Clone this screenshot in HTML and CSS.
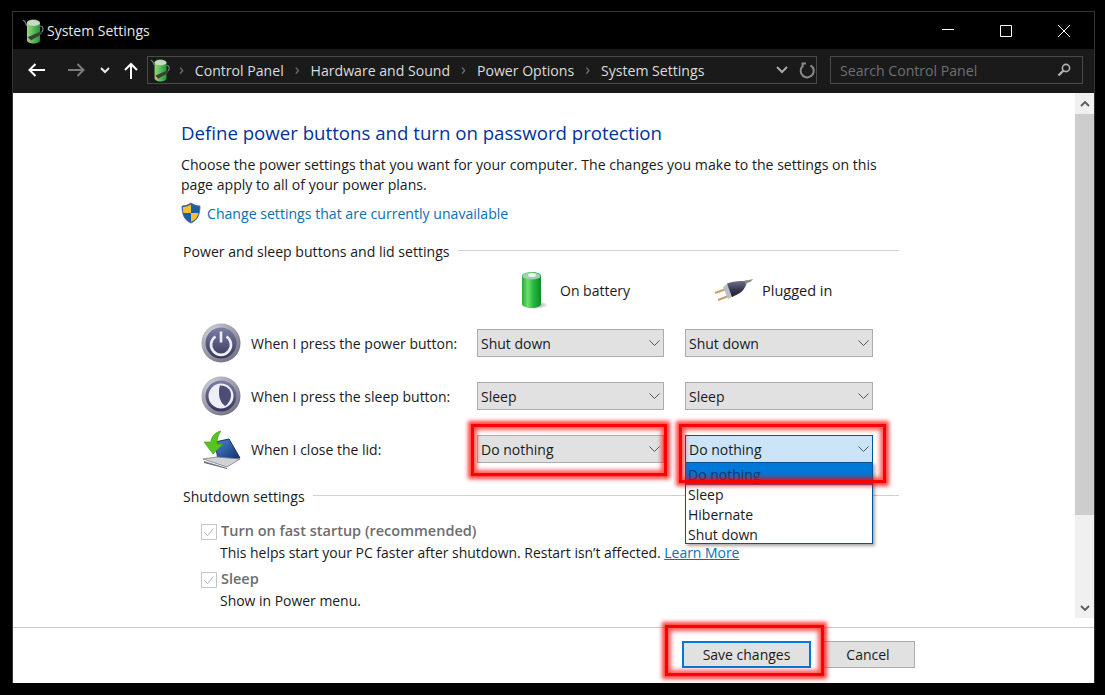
FILE: index.html
```html
<!DOCTYPE html>
<html lang="en">
<head>
<meta charset="utf-8">
<title>System Settings</title>
<link rel="stylesheet" href="styles.css">
</head>
<body>
<div class="window">
  <header class="titlebar">
    <svg class="app-icon" width="24" height="26" viewBox="0 0 24 26"><use href="#batt"/></svg>
    <span class="title">System Settings</span>
    <div class="controls">
      <svg width="14" height="14" viewBox="0 0 14 14"><path d="M1 5.500h12" stroke="#fff" fill="none"/></svg>
      <svg width="14" height="14" viewBox="0 0 14 14"><path d="M1.500 1.500h11v11h-11z" stroke="#fff" fill="none"/></svg>
      <svg width="14" height="14" viewBox="0 0 14 14"><path d="M1 1l12 12M13 1L1 13" stroke="#fff" fill="none"/></svg>
    </div>
  </header>
  <nav class="toolbar">
    <svg class="nav nav-back" width="18" height="14" viewBox="0 0 18 14"><path d="M1.500 7H17M7.500 1L1.500 7l6 6" stroke="#fff" stroke-width="2" fill="none"/></svg>
    <svg class="nav nav-fwd" width="18" height="14" viewBox="0 0 18 14"><path d="M1 7h15.500M10.500 1l6 6-6 6" stroke="#7b7b7b" stroke-width="2" fill="none"/></svg>
    <svg class="nav nav-down" width="10" height="7" viewBox="0 0 10 7"><path d="M1 1l4 4 4-4" stroke="#e8e8e8" stroke-width="2" fill="none"/></svg>
    <svg class="nav nav-up" width="14" height="17" viewBox="0 0 14 17"><path d="M7 17V2M1 8l6-6 6 6" stroke="#fff" stroke-width="2" fill="none"/></svg>
    <div class="address">
      <svg class="crumb-icon" width="22" height="24" viewBox="0 0 24 26"><use href="#batt"/></svg>
      <span class="sep">›</span><span>Control Panel</span>
      <span class="sep">›</span><span>Hardware and Sound</span>
      <span class="sep">›</span><span>Power Options</span>
      <span class="sep">›</span><span>System Settings</span>
      <svg class="addr-down" width="12" height="8" viewBox="0 0 12 8"><path d="M1 1l5 5 5-5" stroke="#a8a8a8" stroke-width="2" fill="none"/></svg>
      <svg class="refresh" width="16" height="17" viewBox="0 0 16 17"><path d="M11.500 3.300A6.500 6.500 0 1 1 3.600 4.300M2.500 1.500H7M3.600 1.500V5" stroke="#8a8a8a" stroke-width="2" fill="none"/></svg>
    </div>
    <div class="search">
      <span>Search Control Panel</span>
      <svg width="14" height="14" viewBox="0 0 14 14"><circle cx="9" cy="5" r="3.600" stroke="#b0b0b0" stroke-width="1.600" fill="none"/><path d="M6.500 7.500L1.500 12.500" stroke="#b0b0b0" stroke-width="2.400"/></svg>
    </div>
  </nav>
  <div class="body">
    <main class="content">
      <h1>Define power buttons and turn on password protection</h1>
      <p class="intro">Choose the power settings that you want for your computer. The changes you make to the settings on this page apply to all of your power plans.</p>
      <div class="uac">
        <svg width="20" height="22" viewBox="0 0 20 22">
          <path d="M10 1c3 2 6 3 9 3 0 8-2 14-9 17C3 18 1 12 1 4c3 0 6-1 9-3z" fill="#1c5fa8"/>
          <path d="M10 2.500v8.500H2.300C2 8.500 2 6.500 2 5c3 0 5.500-1 8-2.500zM10 11h7.500c-.8 4-3 7-7.500 8.700z" fill="#f6c02f"/>
          <path d="M10 1c3 2 6 3 9 3 0 8-2 14-9 17C3 18 1 12 1 4c3 0 6-1 9-3z" fill="none" stroke="#54657a" stroke-width=".8"/>
        </svg>
        <a href="#">Change settings that are currently unavailable</a>
      </div>
      <div class="section section-power"><span>Power and sleep buttons and lid settings</span><i></i></div>
      <div class="grid">
        <div class="col-head col-a">
          <svg width="30" height="40" viewBox="0 0 30 40">
            <defs>
              <linearGradient id="bg" x1="0" x2="1" y1="0" y2="0"><stop offset="0" stop-color="#2aa83a"/><stop offset=".3" stop-color="#6fe06a"/><stop offset=".6" stop-color="#25b840"/><stop offset="1" stop-color="#0d8c2c"/></linearGradient>
              <radialGradient id="sh" cx=".5" cy=".5" r=".5"><stop offset="0" stop-color="#8c8c8c"/><stop offset="1" stop-color="#8c8c8c" stop-opacity="0"/></radialGradient>
            </defs>
            <ellipse cx="17" cy="35" rx="12" ry="4" fill="url(#sh)"/>
            <path d="M3 6c0-2 4-4 9.500-4S22 4 22 6v28c0 2-4 4-9.500 4S3 36 3 34z" fill="url(#bg)"/>
            <ellipse cx="12.500" cy="6" rx="9" ry="3.600" fill="#a9cdb0"/>
            <ellipse cx="13" cy="5" rx="4" ry="2" fill="#eef1ef"/>
          </svg>
          <span>On battery</span>
        </div>
        <div class="col-head col-b">
          <svg width="40" height="24" viewBox="0 0 40 24">
            <defs><linearGradient id="pg" x1="0" x2="0" y1="0" y2="1"><stop offset="0" stop-color="#73778f"/><stop offset=".55" stop-color="#383a50"/><stop offset="1" stop-color="#1d1e2a"/></linearGradient></defs>
            <path d="M1 15l11-4M4 22l12-4.500" stroke="#c8a064" stroke-width="2.200" fill="none"/>
            <path d="M9 9l5-3.500 6 12.500-6 3z" fill="#b9bdca"/>
            <path d="M13 5.500c5-2 12-2.500 17-2.500l4-1-2 5c-2 6-7 9-14 12z" fill="url(#pg)"/>
            <path d="M31 3l8-2-2 2.500-6 2.500z" fill="#8a8d80"/>
          </svg>
          <span>Plugged in</span>
        </div>

        <svg class="row-icon" width="40" height="40" viewBox="0 0 40 40"><use href="#disc"/><path d="M14.500 13.500a10 10 0 1 0 11 0" fill="none" stroke="#eeeef8" stroke-width="2.600"/><path d="M20 8.500v11" stroke="#eeeef8" stroke-width="2.600"/></svg>
        <span class="row-label">When I press the power button:</span>
        <div class="select select-a"><span>Shut down</span><svg class="chev" width="11" height="6" viewBox="0 0 11 6"><path d="M.5.500l5 5 5-5" stroke="#555" fill="none"/></svg></div>
        <div class="select"><span>Shut down</span><svg class="chev" width="11" height="6" viewBox="0 0 11 6"><path d="M.5.500l5 5 5-5" stroke="#555" fill="none"/></svg></div>

        <svg class="row-icon" width="40" height="40" viewBox="0 0 40 40"><use href="#disc"/><circle cx="20" cy="20" r="12.500" fill="#eeeef6"/><path d="M19 9.500c5-.5 11 3 11 9.500 0 5-3 9-6 11-4-3-6-8-6-13 0-3 0-5 1-7.500z" fill="#4b4d74"/></svg>
        <span class="row-label">When I press the sleep button:</span>
        <div class="select select-a"><span>Sleep</span><svg class="chev" width="11" height="6" viewBox="0 0 11 6"><path d="M.5.500l5 5 5-5" stroke="#555" fill="none"/></svg></div>
        <div class="select"><span>Sleep</span><svg class="chev" width="11" height="6" viewBox="0 0 11 6"><path d="M.5.500l5 5 5-5" stroke="#555" fill="none"/></svg></div>

        <svg class="row-icon" width="40" height="40" viewBox="0 0 40 40">
          <defs><linearGradient id="lid" x1="0" x2="1" y1="0" y2="1"><stop offset="0" stop-color="#4a86d8"/><stop offset="1" stop-color="#0f2f66"/></linearGradient></defs>
          <path d="M14 13l14-3 11 19-22 2z" fill="url(#lid)" stroke="#26344e"/>
          <path d="M2 30l14-2 23 2-13 8z" fill="#cfd3d8" stroke="#7a7f88" stroke-width=".8"/>
          <path d="M3 32l23 7v1L3 34z" fill="#6f747d"/>
          <path d="M20 2c-6 1-10 6-10 11H3l9 12 10-10h-6c0-5 1-9 4-13z" fill="#57c41f" stroke="#3c9a16" stroke-width=".6"/>
        </svg>
        <span class="row-label">When I close the lid:</span>
        <div class="select select-a"><span>Do nothing</span><svg class="chev" width="11" height="6" viewBox="0 0 11 6"><path d="M.5.500l5 5 5-5" stroke="#555" fill="none"/></svg></div>
        <div class="select select-open"><span>Do nothing</span><svg class="chev" width="11" height="6" viewBox="0 0 11 6"><path d="M.5.500l5 5 5-5" stroke="#555" fill="none"/></svg>
          <ul class="menu">
            <li class="active">Do nothing</li>
            <li>Sleep</li>
            <li>Hibernate</li>
            <li class="last">Shut down</li>
          </ul>
        </div>
      </div>
      <div class="section section-shutdown"><span>Shutdown settings</span><i></i></div>
      <div class="option">
        <svg class="check" width="16" height="16" viewBox="0 0 16 16"><path d="M.5.500h15v15H.5z" fill="#fff" stroke="#c4c4c4"/><path d="M3.500 8.500l3 3 6-7" stroke="#b4b4b4" fill="none"/></svg>
        <div class="opt-text"><b>Turn on fast startup (recommended)</b><span>This helps start your PC faster after shutdown. Restart isn’t affected. <a href="#">Learn More</a></span></div>
      </div>
      <div class="option option-sleep">
        <svg class="check" width="16" height="16" viewBox="0 0 16 16"><path d="M.5.500h15v15H.5z" fill="#fff" stroke="#c4c4c4"/><path d="M3.500 8.500l3 3 6-7" stroke="#b4b4b4" fill="none"/></svg>
        <div class="opt-text"><b>Sleep</b><span>Show in Power menu.</span></div>
      </div>
    </main>
    <aside class="scrollbar">
      <div class="sb-btn"><svg width="10" height="7" viewBox="0 0 10 7"><path d="M1 6l4-4 4 4" stroke="#5a5a5a" stroke-width="1.800" fill="none"/></svg></div>
      <div class="sb-thumb"></div>
      <div class="sb-track"></div>
      <div class="sb-btn"><svg width="10" height="7" viewBox="0 0 10 7"><path d="M1 1l4 4 4-4" stroke="#5a5a5a" stroke-width="1.800" fill="none"/></svg></div>
    </aside>
  </div>
  <footer class="footer">
    <button class="btn btn-default">Save changes</button>
    <button class="btn btn-cancel">Cancel</button>
  </footer>
  <div class="mark mark-a"></div>
  <div class="mark mark-b"></div>
  <div class="mark mark-c"></div>
</div>
<svg class="defs" width="0" height="0">
  <defs>
    <linearGradient id="bt" x1="0" x2="1" y1="0" y2="0"><stop offset="0" stop-color="#8fdc78"/><stop offset="1" stop-color="#1f9a35"/></linearGradient>
    <radialGradient id="rim" cx=".35" cy=".3" r=".85"><stop offset="0" stop-color="#dcdce4"/><stop offset=".6" stop-color="#9a9aa8"/><stop offset="1" stop-color="#5f5f74"/></radialGradient>
    <linearGradient id="core" x1="0" x2="0" y1="0" y2="1"><stop offset="0" stop-color="#7c7ea6"/><stop offset="1" stop-color="#35375a"/></linearGradient>
    <g id="batt">
      <path d="M5 5c0-2 3-3.500 6.500-3.500S18 3 18 5v17c0 2-3 3.500-6.500 3.500S5 24 5 22z" fill="url(#bt)"/>
      <ellipse cx="11.500" cy="5" rx="6.500" ry="3" fill="#c9d8c8"/>
      <path d="M6 19l14-6v3l-12 7z" fill="#3a3f3a"/>
      <path d="M6 20l3 2-2 2z" fill="#c8b070"/>
      <path d="M1 2c3 1 3 5 4 6M18 8c3 0 4 3 2 6" stroke="#7c8288" stroke-width="1.200" fill="none"/>
    </g>
    <g id="disc">
      <circle cx="20" cy="20" r="19.500" fill="url(#rim)"/>
      <circle cx="20" cy="20" r="15.500" fill="url(#core)"/>
    </g>
  </defs>
</svg>
</body>
</html>
```
FILE: styles.css
```css
* { box-sizing: border-box; }
html, body { margin: 0; height: 100%; }
body { background: #000; font-family: "Open Sans", "Noto Sans", sans-serif; font-size: 14px; color: #1a1a1a; overflow: hidden; }
.defs { position: absolute; }
.window { position: relative; margin: 11px 0 0 12px; width: 1083px; height: 672px; border: 1px solid #333; border-bottom: 0; display: flex; flex-direction: column; }
.titlebar { height: 37px; background: #000; color: #e8e8e8; display: flex; align-items: center; padding-left: 9px; flex: none; }
.app-icon { flex: none; }
.title { margin-left: 1px; font-size: 14px; }
.controls { margin-left: auto; display: flex; gap: 44px; padding-right: 23px; }
.toolbar { height: 44px; background: #1a1a1a; display: flex; align-items: center; color: #dcdcdc; flex: none; padding-bottom: 2px; font-size: 14.1px; }
.nav { flex: none; }
.nav-back { margin-left: 15px; }
.nav-fwd { margin-left: 21px; }
.nav-down { margin-left: 15px; }
.nav-up { margin-left: 14px; }
.address { margin-left: 9px; width: 670px; height: 28px; border: 1px solid #4a4a4a; display: flex; align-items: center; gap: 11px; padding-left: 2px; padding-right: 1px; }
.crumb-icon { flex: none; margin-right: -4px; }
.sep { color: #7a7a7a; font-size: 16px; line-height: 1; margin-top: -3px; }
.addr-down { margin-left: auto; }
.search { margin-left: 13px; width: 253px; height: 28px; border: 1px solid #4a4a4a; display: flex; align-items: center; justify-content: space-between; padding: 0 11px 0 9px; color: #6f6f6f; }
.body { background: #fff; height: 534px; display: flex; flex: none; }
.content { flex: 1; padding: 26px 0 0 168px; min-width: 0; }
h1 { margin: 0; font-size: 18.65px; line-height: 28px; font-weight: 400; color: #003399; }
.intro { margin: 8px 0 0; width: 700px; line-height: 20px; font-size: 14.1px; }
.uac { display: flex; align-items: center; gap: 6px; margin-top: 7px; height: 22px; font-size: 14.1px; }
a { color: #0a6fb4; text-decoration: none; }
.section { display: flex; align-items: center; gap: 8px; margin-left: 2px; width: 716px; line-height: 20px; font-size: 14.1px; }
.section i { flex: 1; height: 1px; background: #d0d0d0; margin-top: -3px; }
.section-power { margin-top: 18px; }
.section-shutdown { margin-top: 24px; }
.grid { display: grid; grid-template-columns: 40px 236px 208px 188px; grid-template-rows: 42px repeat(3, 28px); row-gap: 25px; margin-left: 20px; width: 672px; }
.col-head { display: flex; align-items: center; padding-top: 14px; }
.col-a { grid-column: 3; padding-left: 42px; }
.col-b { grid-column: 4; padding-left: 29px; }
.col-a span { margin-left: 11px; }
.col-b span { margin-left: 8px; font-size: 14.5px; }
.row-icon { align-self: center; }
.row-label { padding-left: 10px; align-self: center; }
.select { position: relative; background: #e1e1e1; border: 1px solid #adadad; display: flex; align-items: center; justify-content: space-between; padding: 0 3px; }
.select-a { margin-right: 21px; }
.select-open { background: #cce4f7; border-color: #005499; }
.menu { position: absolute; left: -1px; top: 26px; width: 188px; margin: 0; padding: 0; list-style: none; background: #fff; border: 1px solid #005499; box-shadow: 2px 2px 3px rgba(0,0,0,.35); z-index: 2; line-height: 20px; }
.menu li { padding-left: 2px; height: 20px; }
.menu .active { background: #0078d7; color: #073a6b; height: 22px; padding-top: 2px; }
.menu .last { height: 18px; }
.option { display: flex; gap: 4px; margin-left: 20px; margin-top: 13px; }
.option-sleep { margin-top: 4px; }
.check { flex: none; margin-top: 4px; }
.opt-text { display: flex; flex-direction: column; line-height: 22px; }
.opt-text b { color: #6d6d6d; font-weight: 600; font-size: 14.5px; }
.opt-text span { margin-left: -1px; font-size: 13.95px; }
.opt-text a { text-decoration: underline; }
.scrollbar { width: 19px; background: #f0f0f0; display: flex; flex-direction: column; height: 525px; flex: none; }
.sb-btn { height: 20px; display: flex; align-items: center; justify-content: center; flex: none; }
.sb-thumb { height: 401px; background: #cdcdcd; margin-top: 1px; flex: none; }
.sb-track { flex: 1; }
.footer { flex: 1; background: #fff; border-top: 1px solid #c8c8c8; display: flex; gap: 10px; padding: 13px 0 0 669px; }
.btn { font: inherit; color: #1a1a1a; height: 27px; background: #e1e1e1; border: 1px solid #adadad; padding: 0; }
.btn-default { width: 129px; border: 2px solid #0078d7; }
.btn-cancel { width: 94px; }
.mark { position: absolute; border: 3px solid #f00; box-shadow: 0 0 4px 3px rgba(255,0,0,.75), inset 0 0 4px 3px rgba(255,0,0,.65); pointer-events: none; z-index: 3; }
.mark-a { left: 458px; top: 412px; width: 196px; height: 52px; }
.mark-b { left: 666px; top: 412px; width: 207px; height: 59px; }
.mark-c { left: 652px; top: 613px; width: 159px; height: 51px; }
```
